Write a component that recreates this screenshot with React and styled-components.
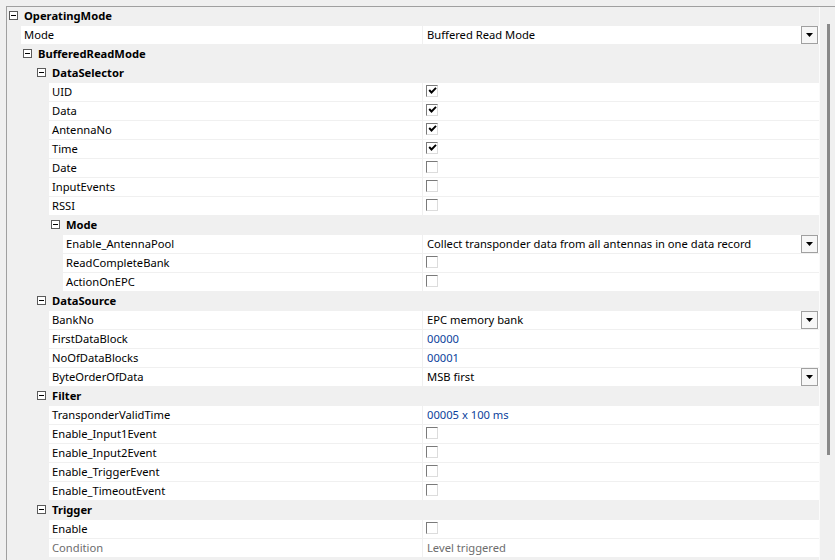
import styled, { createGlobalStyle } from "styled-components";

const GlobalStyle = createGlobalStyle`
	html, body {
		margin: 0;
		padding: 0;
		background: #f0f0f0;
		overflow: hidden;
	}
	body {
		font-family: "Noto Sans", "Open Sans", sans-serif;
		font-size: 11.2px;
		color: #000;
	}
`;

const rows = [
	{ cat: true, depth: 0, label: "OperatingMode" },
	{ depth: 1, label: "Mode", value: "Buffered Read Mode", dropdown: true },
	{ cat: true, depth: 1, label: "BufferedReadMode" },
	{ cat: true, depth: 2, label: "DataSelector" },
	{ depth: 3, label: "UID", check: true },
	{ depth: 3, label: "Data", check: true },
	{ depth: 3, label: "AntennaNo", check: true },
	{ depth: 3, label: "Time", check: true },
	{ depth: 3, label: "Date", check: false },
	{ depth: 3, label: "InputEvents", check: false },
	{ depth: 3, label: "RSSI", check: false },
	{ cat: true, depth: 3, label: "Mode" },
	{
		depth: 4,
		label: "Enable_AntennaPool",
		value: "Collect transponder data from all antennas in one data record",
		dropdown: true,
	},
	{ depth: 4, label: "ReadCompleteBank", check: false },
	{ depth: 4, label: "ActionOnEPC", check: false },
	{ cat: true, depth: 2, label: "DataSource" },
	{ depth: 3, label: "BankNo", value: "EPC memory bank", dropdown: true },
	{ depth: 3, label: "FirstDataBlock", value: "00000", blue: true },
	{ depth: 3, label: "NoOfDataBlocks", value: "00001", blue: true },
	{ depth: 3, label: "ByteOrderOfData", value: "MSB first", dropdown: true },
	{ cat: true, depth: 2, label: "Filter" },
	{ depth: 3, label: "TransponderValidTime", value: "00005 x 100 ms", blue: true },
	{ depth: 3, label: "Enable_Input1Event", check: false },
	{ depth: 3, label: "Enable_Input2Event", check: false },
	{ depth: 3, label: "Enable_TriggerEvent", check: false },
	{ depth: 3, label: "Enable_TimeoutEvent", check: false },
	{ cat: true, depth: 2, label: "Trigger" },
	{ depth: 3, label: "Enable", check: false },
	{ depth: 3, label: "Condition", value: "Level triggered", disabled: true },
];

function Expander() {
	return (
		<ExpandBox>
			<svg width="9" height="9" viewBox="0 0 9 9">
				<rect x="0.5" y="0.5" width="8" height="8" fill="#fff" stroke="#5a5a5a" />
				<line x1="2" y1="4.5" x2="7" y2="4.5" stroke="#000" />
			</svg>
		</ExpandBox>
	);
}

function CheckBox({ checked }) {
	return (
		<Check>
			{checked && (
				<svg width="9" height="9" viewBox="0 0 9 9">
					<path d="M1.2 4 L3.5 6.5 L8 1.8" fill="none" stroke="#000" strokeWidth="1.9" />
				</svg>
			)}
		</Check>
	);
}

function DropButton() {
	return (
		<Drop>
			<svg width="7" height="4" viewBox="0 0 7 4">
				<path d="M0 0 H7 L3.5 4 Z" fill="#000" />
			</svg>
		</Drop>
	);
}

export default function App() {
	return (
		<>
			<GlobalStyle />
			<Frame>
				<Grid>
					{rows.map((r, i) =>
						r.cat ? (
							<CategoryRow key={i} $depth={r.depth}>
								<Expander />
								<b>{r.label}</b>
							</CategoryRow>
						) : (
							<PropRow key={i}>
								<NameCell $depth={r.depth} $disabled={r.disabled}>
									<span>{r.label}</span>
								</NameCell>
								<ValueCell $blue={r.blue} $disabled={r.disabled}>
									{r.check !== undefined ? (
										<CheckBox checked={r.check} />
									) : (
										<ValueText>{r.value}</ValueText>
									)}
									{r.dropdown && <DropButton />}
								</ValueCell>
							</PropRow>
						)
					)}
				</Grid>
				<ScrollBar>
					<Thumb />
				</ScrollBar>
			</Frame>
		</>
	);
}

const Frame = styled.div`
	margin: 6px 0 0 6px;
	height: 554px;
	border-top: 1px solid #a0a0a0;
	border-left: 1px solid #a0a0a0;
	display: flex;
	overflow: hidden;
`;

const Grid = styled.div`
	width: 813px;
	display: flex;
	flex-direction: column;
	gap: 1px;
`;

const CategoryRow = styled.div`
	height: 18px;
	display: flex;
	align-items: center;
	gap: 6px;
	padding-left: ${(p) => 2 + p.$depth * 14}px;

	b {
		font-weight: 700;
		line-height: 18px;
		margin-top: -1px;
	}
`;

const ExpandBox = styled.span`
	display: flex;
	width: 9px;
	height: 9px;
	margin-top: -1px;
`;

const PropRow = styled.div`
	height: 18px;
	display: grid;
	grid-template-columns: 415px 1fr;
	column-gap: 1px;
`;

const NameCell = styled.div`
	margin-left: ${(p) => p.$depth * 14}px;
	padding: 0 0 1px 3px;
	background: #fff;
	display: flex;
	align-items: center;
	white-space: nowrap;
	color: ${(p) => (p.$disabled ? "#6d6d6d" : "#000")};
`;

const ValueCell = styled.div`
	background: #fff;
	padding-left: 3px;
	display: flex;
	align-items: center;
	justify-content: space-between;
	white-space: nowrap;
	color: ${(p) => (p.$disabled ? "#6d6d6d" : p.$blue ? "#0b3f9c" : "#000")};
`;

const ValueText = styled.span`
	padding-left: 1px;
	margin-top: -1px;
`;

const Check = styled.span`
	width: 10px;
	height: 10px;
	margin-top: -3px;
	border-top: 1px solid #7a7a7a;
	border-left: 1px solid #7a7a7a;
	border-right: 1px solid #dcdcdc;
	border-bottom: 1px solid #dcdcdc;
	background: #fff;
	display: flex;
	align-items: center;
	justify-content: center;
`;

const Drop = styled.span`
	width: 15px;
	height: 16px;
	margin-right: 1px;
	border: 1px solid #a0a0a0;
	background: #f7f7f7;
	display: flex;
	align-items: center;
	justify-content: center;
`;

const ScrollBar = styled.div`
	width: 15px;
	border-left: 1px solid #fbfbfb;
	padding-top: 17px;
	display: flex;
	justify-content: center;
`;

const Thumb = styled.div`
	width: 3px;
	height: 431px;
	background: #8a8a8a;
	margin-left: 1px;
`;
